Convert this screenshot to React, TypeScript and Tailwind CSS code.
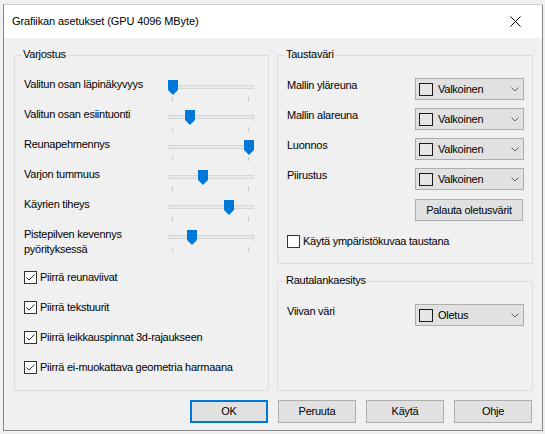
import React from 'react';

const font = { fontFamily: '"Liberation Sans", Arial, sans-serif' };

const sliders = [
  { label: 'Valitun osan läpinäkyvyys', value: 0 },
  { label: 'Valitun osan esiintuonti', value: 0.22 },
  { label: 'Reunapehmennys', value: 1 },
  { label: 'Varjon tummuus', value: 0.39 },
  { label: 'Käyrien tiheys', value: 0.74 },
  { label: 'Pistepilven kevennys pyörityksessä', value: 0.25 },
];

const checks = [
  'Piirrä reunaviivat',
  'Piirrä tekstuurit',
  'Piirrä leikkauspinnat 3d-rajaukseen',
  'Piirrä ei-muokattava geometria harmaana',
];

const colors = ['Mallin yläreuna', 'Mallin alareuna', 'Luonnos', 'Piirustus'];

function Slider({ value }: { value: number }) {
  return (
    <div className="relative w-[86px] h-[22px] mt-[4px] shrink-0">
      <div className="absolute left-0 right-0 top-[5px] h-[4px] bg-[#e7eaea] border border-[#d6d6d6]" />
      <div className="absolute top-[17px] left-[4px] w-px h-[4px] bg-[#c4c4c4]" />
      <div className="absolute top-[17px] left-[80px] w-px h-[4px] bg-[#c4c4c4]" />
      <svg className="absolute top-0" style={{ left: Math.round(value * 76) }} width="10" height="15" viewBox="0 0 10 15">
        <path d="M0 0H10V10L5 15L0 10Z" fill="#0078d7" />
      </svg>
    </div>
  );
}

function CheckBox({ checked, label }: { checked: boolean; label: string }) {
  return (
    <div className="flex items-center gap-[3px]">
      <div className="w-[13px] h-[13px] border border-[#333] bg-white flex items-center justify-center shrink-0">
        {checked && (
          <svg width="11" height="11" viewBox="0 0 11 11">
            <polyline points="1.5,5.5 4,8 9.5,2.5" fill="none" stroke="#333" strokeWidth="1" />
          </svg>
        )}
      </div>
      <span className="leading-[15px]">{label}</span>
    </div>
  );
}

function ColorCombo({ text }: { text: string }) {
  return (
    <div className="w-[109px] h-[22px] bg-[#e1e1e1] border border-[#adadad] flex items-center pl-[3px] pr-[4px] shrink-0">
      <div className="w-[14px] h-[13px] border border-[#1a1a1a] bg-[#e6e6e6]" />
      <span className="ml-[5px] flex-1 leading-[15px]">{text}</span>
      <svg width="8" height="5" viewBox="0 0 8 5">
        <path d="M0.5 0.5L4 4L7.5 0.5" fill="none" stroke="#606060" strokeWidth="1" />
      </svg>
    </div>
  );
}

function Group({ title, className, children }: { title: string; className: string; children: React.ReactNode }) {
  return (
    <div className={`relative border border-[#dcdcdc] ${className}`}>
      <span className="absolute left-[7px] -top-[9px] px-px bg-[#f0f0f0] leading-[15px]">{title}</span>
      {children}
    </div>
  );
}

function Button({ label, primary }: { label: string; primary?: boolean }) {
  return (
    <div
      className={`w-[78px] h-[23px] flex items-center justify-center bg-[#e1e1e1] leading-[15px] ${
        primary ? 'border-2 border-[#0078d7]' : 'border border-[#adadad]'
      }`}
    >
      {label}
    </div>
  );
}

export default function App() {
  return (
    <div className="w-[545px] h-[434px] bg-[#f0f0f0] pt-[4px] pl-[3px] text-[11px] tracking-[-0.25px] text-black" style={font}>
      <div className="w-[540px] h-[427px] border border-[#858585] border-t-[#cfcfcf] flex flex-col">
        {/* title bar */}
        <div className="h-[33px] bg-white flex items-center justify-between shrink-0">
          <span className="pl-[8px] leading-[15px] tracking-[-0.1px]">Grafiikan asetukset (GPU 4096 MByte)</span>
          <div className="w-[54px] flex items-center justify-center">
            <svg width="11" height="11" viewBox="0 0 11 11">
              <path d="M0.5 0.5L10.5 10.5M10.5 0.5L0.5 10.5" stroke="#000" strokeWidth="1" />
            </svg>
          </div>
        </div>

        {/* body */}
        <div className="flex-1 bg-[#f0f0f0] pl-[10px] pr-[9px] pt-[17px]">
          <div className="flex gap-[8px]">
            <Group title="Varjostus" className="w-[255px] h-[336px] pl-[9px] pt-[20px]">
              {sliders.map((s, i) => (
                <div key={i} className="flex h-[30px]">
                  <div className="w-[144px] leading-[15px] pt-px">
                    {i === 5 ? (
                      <>
                        Pistepilven kevennys
                        <br />
                        pyörityksessä
                      </>
                    ) : (
                      s.label
                    )}
                  </div>
                  <Slider value={s.value} />
                </div>
              ))}
              <div className="mt-[6px]">
                {checks.map((c) => (
                  <div key={c} className="h-[30px] flex items-center">
                    <CheckBox checked label={c} />
                  </div>
                ))}
              </div>
            </Group>

            <div className="flex flex-col gap-[17px]">
              <Group title="Taustaväri" className="w-[256px] h-[209px] pl-[9px] pr-[8px] pt-[22px]">
                <div className="flex flex-col gap-[8px]">
                  {colors.map((c) => (
                    <div key={c} className="flex justify-between h-[22px]">
                      <span className="leading-[15px]">{c}</span>
                      <ColorCombo text="Valkoinen" />
                    </div>
                  ))}
                </div>
                <div className="flex justify-end mt-[9px] mr-px">
                  <div className="w-[108px] h-[22px] bg-[#e1e1e1] border border-[#adadad] flex items-center justify-center leading-[15px]">
                    Palauta oletusvärit
                  </div>
                </div>
                <div className="mt-[13px]">
                  <CheckBox checked={false} label="Käytä ympäristökuvaa taustana" />
                </div>
              </Group>

              <Group title="Rautalankaesitys" className="w-[256px] h-[110px] pl-[9px] pr-[8px] pt-[22px]">
                <div className="flex justify-between h-[22px]">
                  <span className="leading-[15px]">Viivan väri</span>
                  <ColorCombo text="Oletus" />
                </div>
              </Group>
            </div>
          </div>

          <div className="flex justify-end gap-[10px] mt-[9px] pr-px">
            <Button label="OK" primary />
            <Button label="Peruuta" />
            <Button label="Käytä" />
            <Button label="Ohje" />
          </div>
        </div>
      </div>
    </div>
  );
}
